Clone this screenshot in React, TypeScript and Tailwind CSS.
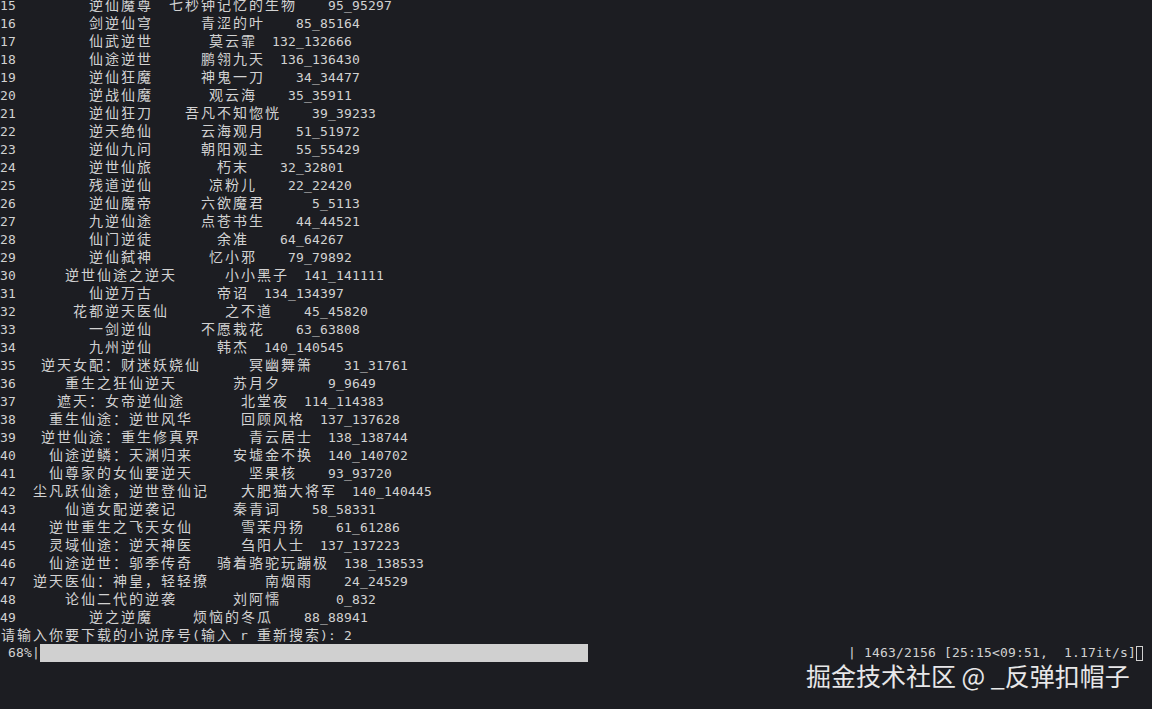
import React from 'react';

type Row = [string, string, string, string];

const rows: Row[] = [
  ['15', '逆仙魔尊', '七秒钟记忆的生物', '95_95297'],
  ['16', '剑逆仙穹', '青涩的叶', '85_85164'],
  ['17', '仙武逆世', '莫云霏', '132_132666'],
  ['18', '仙途逆世', '鹏翎九天', '136_136430'],
  ['19', '逆仙狂魔', '神鬼一刀', '34_34477'],
  ['20', '逆战仙魔', '观云海', '35_35911'],
  ['21', '逆仙狂刀', '吾凡不知惚恍', '39_39233'],
  ['22', '逆天绝仙', '云海观月', '51_51972'],
  ['23', '逆仙九问', '朝阳观主', '55_55429'],
  ['24', '逆世仙旅', '朽末', '32_32801'],
  ['25', '残道逆仙', '凉粉儿', '22_22420'],
  ['26', '逆仙魔帝', '六欲魔君', '5_5113'],
  ['27', '九逆仙途', '点苍书生', '44_44521'],
  ['28', '仙门逆徒', '余准', '64_64267'],
  ['29', '逆仙弑神', '忆小邪', '79_79892'],
  ['30', '逆世仙途之逆天', '小小黑子', '141_141111'],
  ['31', '仙逆万古', '帝诏', '134_134397'],
  ['32', '花都逆天医仙', '之不道', '45_45820'],
  ['33', '一剑逆仙', '不愿栽花', '63_63808'],
  ['34', '九州逆仙', '韩杰', '140_140545'],
  ['35', '逆天女配：财迷妖娆仙', '冥幽舞箫', '31_31761'],
  ['36', '重生之狂仙逆天', '苏月夕', '9_9649'],
  ['37', '遮天：女帝逆仙途', '北堂夜', '114_114383'],
  ['38', '重生仙途：逆世风华', '回顾风格', '137_137628'],
  ['39', '逆世仙途：重生修真界', '青云居士', '138_138744'],
  ['40', '仙途逆鳞：天渊归来', '安墟金不换', '140_140702'],
  ['41', '仙尊家的女仙要逆天', '坚果核', '93_93720'],
  ['42', '尘凡跃仙途，逆世登仙记', '大肥猫大将军', '140_140445'],
  ['43', '仙道女配逆袭记', '秦青词', '58_58331'],
  ['44', '逆世重生之飞天女仙', '雪茉丹扬', '61_61286'],
  ['45', '灵域仙途：逆天神医', '刍阳人士', '137_137223'],
  ['46', '仙途逆世：邬季传奇', '骑着骆驼玩蹦极', '138_138533'],
  ['47', '逆天医仙：神皇，轻轻撩', '南烟雨', '24_24529'],
  ['48', '论仙二代的逆袭', '刘阿懦', '0_832'],
  ['49', '逆之逆魔', '烦恼的冬瓜', '88_88941'],
];

const isWide = (ch: string) => ch.charCodeAt(0) > 0x2e80;

// terminal columns: CJK takes two cells, python padding doesn't know that
function buildLine([idx, title, author, num]: Row): string {
  const n = title.length;
  const m = author.length;
  let out = idx;
  let col = idx.length;
  const put = (text: string, at: number) => {
    out += ' '.repeat(Math.max(0, at - col)) + text;
    col = Math.max(col, at) + [...text].reduce((w, c) => w + (isWide(c) ? 2 : 1), 0);
  };
  put(title, 15 - n);
  put(author, 25 + n - m);
  put(num, 37 + n + m - num.length);
  return out;
}

const Cells: React.FC<{ text: string }> = ({ text }) => (
  <>
    {[...text].map((ch, i) =>
      isWide(ch) ? (
        <span key={i} className="inline-block w-[16px] text-center text-[14px]">
          {ch}
        </span>
      ) : (
        <span key={i} className="inline-block w-[8px] text-center">
          {ch === ' ' ? '\u00a0' : ch}
        </span>
      ),
    )}
  </>
);

const TermLine: React.FC<{ text: string }> = ({ text }) => (
  <div className="h-[18px] leading-[18px] whitespace-nowrap">
    <Cells text={text} />
  </div>
);

export default function App() {
  return (
    <div className="relative w-[1152px] h-[709px] overflow-hidden bg-[#1c1d22] text-[#d2d2d2] text-[13px] font-[family-name:'DejaVu_Sans_Mono','Noto_Sans_CJK_SC',monospace]">
      <div className="-mt-[4px] flex flex-col">
        {rows.map((r) => (
          <TermLine key={r[0]} text={buildLine(r)} />
        ))}
        <TermLine text="请输入你要下载的小说序号(输入 r 重新搜索): 2" />
        <div className="flex h-[18px] leading-[18px] whitespace-nowrap">
          <Cells text=" 68%|" />
          <div className="w-[548px] h-[18px] bg-[#d0d0d0]" />
          <div className="ml-auto mr-[8px] flex items-center">
            <Cells text="| 1463/2156 [25:15<09:51,  1.17it/s]" />
            <span className="inline-block w-[8px] flex justify-center">
              <span className="block w-[7px] h-[15px] border border-[#d0d0d0]" />
            </span>
          </div>
        </div>
      </div>
      <div className="absolute left-[806px] top-[661px] text-[25px] leading-[28px] text-white/90 font-[family-name:'Noto_Sans_CJK_SC',sans-serif] whitespace-nowrap">
        掘金技术社区 @ _反弹扣帽子
      </div>
    </div>
  );
}
